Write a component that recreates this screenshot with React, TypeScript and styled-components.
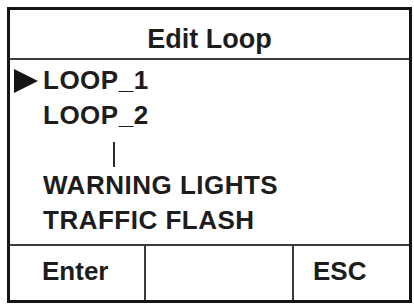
import styled, { createGlobalStyle } from 'styled-components';

const GlobalStyle = createGlobalStyle`
    html, body {
        margin: 0;
        padding: 0;
        background: #ffffff;
    }
    body {
        padding: 7px;
        font-family: "Liberation Sans", Arial, sans-serif;
        color: #1d1d1d;
    }
`;

const Frame = styled.div`
    width: 405px;
    height: 296px;
    box-sizing: border-box;
    border: 3px solid #141414;
    display: flex;
    flex-direction: column;
    background: #fff;
`;

const Header = styled.div`
    height: 50px;
    box-sizing: border-box;
    padding-top: 9px;
    line-height: 41px;
    text-align: center;
    font-size: 27px;
    font-weight: 700;
    border-bottom: 2px solid #3a3a3a;
`;

const List = styled.div`
    height: 186px;
    box-sizing: border-box;
    padding-top: 3px;
    border-bottom: 2px solid #3a3a3a;
`;

const Row = styled.div`
    display: grid;
    grid-template-columns: 33px 1fr;
    align-items: center;
    height: 35px;
    font-size: 26px;
    font-weight: 700;
    line-height: 35px;
    letter-spacing: 0.5px;
    white-space: nowrap;
`;

const Marker = styled.span<{ $active?: boolean }>`
    display: block;
    width: 0;
    height: 0;
    margin-left: 4px;
    border-top: 12px solid transparent;
    border-bottom: 12px solid transparent;
    border-left: 24px solid ${(p) => (p.$active ? '#141414' : 'transparent')};
`;

const Cursor = styled.span`
    display: block;
    width: 2px;
    height: 25px;
    margin: 8px 0 0 70px;
    background: #2a2a2a;
`;

const Footer = styled.div`
    display: grid;
    grid-template-columns: 134px 148px 1fr;
    flex: 1;
    font-size: 26px;
    font-weight: 700;
    line-height: 50px;
`;

const Key = styled.div<{ $pad: number; $divider?: boolean }>`
    padding-left: ${(p) => p.$pad}px;
    border-left: ${(p) => (p.$divider ? '2px solid #3a3a3a' : 'none')};
`;

const items = ['LOOP_1', 'LOOP_2', null, 'WARNING LIGHTS', 'TRAFFIC FLASH'];

export default function App() {
    const selected = 0;

    return (
        <>
            <GlobalStyle />
            <Frame>
                <Header>Edit Loop</Header>
                <List>
                    {items.map((label, i) => (
                        <Row key={i}>
                            <Marker $active={i === selected} />
                            {label === null ? <Cursor /> : <span>{label}</span>}
                        </Row>
                    ))}
                </List>
                <Footer>
                    <Key $pad={32}>Enter</Key>
                    <Key $pad={0} $divider />
                    <Key $pad={19} $divider>
                        ESC
                    </Key>
                </Footer>
            </Frame>
        </>
    );
}
